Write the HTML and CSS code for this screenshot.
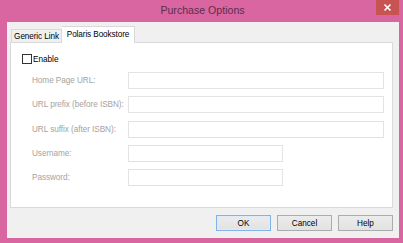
FILE: index.html
```html
<!DOCTYPE html>
<html>
<head>
<meta charset="utf-8">
<link rel="stylesheet" href="styles.css">
</head>
<body>
<div class="window">
  <div class="titlebar">
    <span class="title">Purchase Options</span>
    <span class="close"><svg width="9" height="9" viewBox="0 0 9 9"><path d="M1.5 1.5 L7.5 7.5 M7.5 1.5 L1.5 7.5" stroke="#fff" stroke-width="1.6"/></svg></span>
  </div>
  <div class="client">
    <div class="tabs">
      <div class="tab">Generic Link</div>
      <div class="tab active">Polaris Bookstore</div>
    </div>
    <div class="panel">
      <label class="enable"><span class="check"></span>Enable</label>
      <div class="form">
        <span class="lbl">Home Page URL:</span><span class="field"></span>
        <span class="lbl">URL prefix (before ISBN):</span><span class="field"></span>
        <span class="lbl">URL suffix (after ISBN):</span><span class="field"></span>
        <span class="lbl">Username:</span><span class="field short"></span>
        <span class="lbl">Password:</span><span class="field short"></span>
      </div>
    </div>
    <div class="buttons">
      <button class="btn default">OK</button>
      <button class="btn">Cancel</button>
      <button class="btn">Help</button>
    </div>
  </div>
</div>
</body>
</html>
```
FILE: styles.css
```css
html, body {
  margin: 0;
  padding: 0;
}
body {
  width: 403px;
  height: 243px;
  background: #d966a0;
  overflow: hidden;
  font-family: "Liberation Sans", Arial, sans-serif;
}
.window {
  position: relative;
  width: 403px;
  height: 243px;
  display: flex;
  flex-direction: column;
}
.titlebar {
  height: 22px;
  display: flex;
  justify-content: center;
  align-items: center;
}
.title {
  font-family: "Liberation Sans", sans-serif;
  font-size: 10.6px;
  color: #5b2f4c;
  margin-left: 2px;
  margin-top: -2px;
}
.close {
  position: absolute;
  top: 0;
  left: 376px;
  width: 23px;
  height: 15px;
  background: #c75352;
  display: flex;
  align-items: center;
  justify-content: center;
}
.client {
  margin: 0 4px 0 7px;
  height: 216px;
  background: #f0f0f0;
  display: flex;
  flex-direction: column;
  font-size: 8.2px;
  color: #000;
}
.tabs {
  display: flex;
  align-items: flex-end;
  height: 20px;
  padding-left: 4px;
  position: relative;
  z-index: 1;
}
.tab {
  box-sizing: border-box;
  height: 13px;
  border: 1px solid #d9d9d9;
  border-bottom: none;
  background: #f0f0f0;
  padding: 0;
  display: flex;
  align-items: center;
  width: 51px;
  justify-content: center;
  white-space: nowrap;
  letter-spacing: -0.1px;
}
.tab.active {
  height: 17px;
  margin-bottom: -1px;
  background: #fff;
  border-left: none;
  width: 73px;
  padding-bottom: 2px;
}
.panel {
  box-sizing: border-box;
  margin-left: 3px;
  width: 383px;
  height: 166px;
  background: #fff;
  border: 1px solid #d9d9d9;
  padding: 11px 0 0 11px;
}
.enable {
  display: flex;
  align-items: center;
  height: 10px;
  font-size: 8.2px;
}
.check {
  box-sizing: border-box;
  width: 10px;
  height: 10px;
  border: 1px solid #333;
  background: #fff;
  margin-right: 1px;
}
.form {
  display: grid;
  grid-template-columns: 96px 256px;
  grid-auto-rows: 17px;
  row-gap: 7.25px;
  margin-top: 8px;
  margin-left: 10px;
}
.lbl {
  color: #a3a3a3;
  display: flex;
  align-items: center;
  white-space: nowrap;
  letter-spacing: -0.05px;
}
.field {
  box-sizing: border-box;
  border: 1px solid #e3e3e3;
  background: #fff;
}
.field.short {
  width: 155px;
}
.buttons {
  display: flex;
  justify-content: flex-end;
  gap: 6px;
  padding: 7px 6px 0 0;
}
.btn {
  box-sizing: border-box;
  width: 55px;
  height: 16px;
  margin: 0;
  padding: 0;
  font-family: "Liberation Sans", Arial, sans-serif;
  font-size: 8.2px;
  color: #000;
  background: linear-gradient(#ececec, #e2e2e2);
  border: 1px solid #acacac;
  border-radius: 0;
}
.btn.default {
  border-color: #7eb4ea;
  box-shadow: inset 0 0 0 1px #dcecfc;
}
```
